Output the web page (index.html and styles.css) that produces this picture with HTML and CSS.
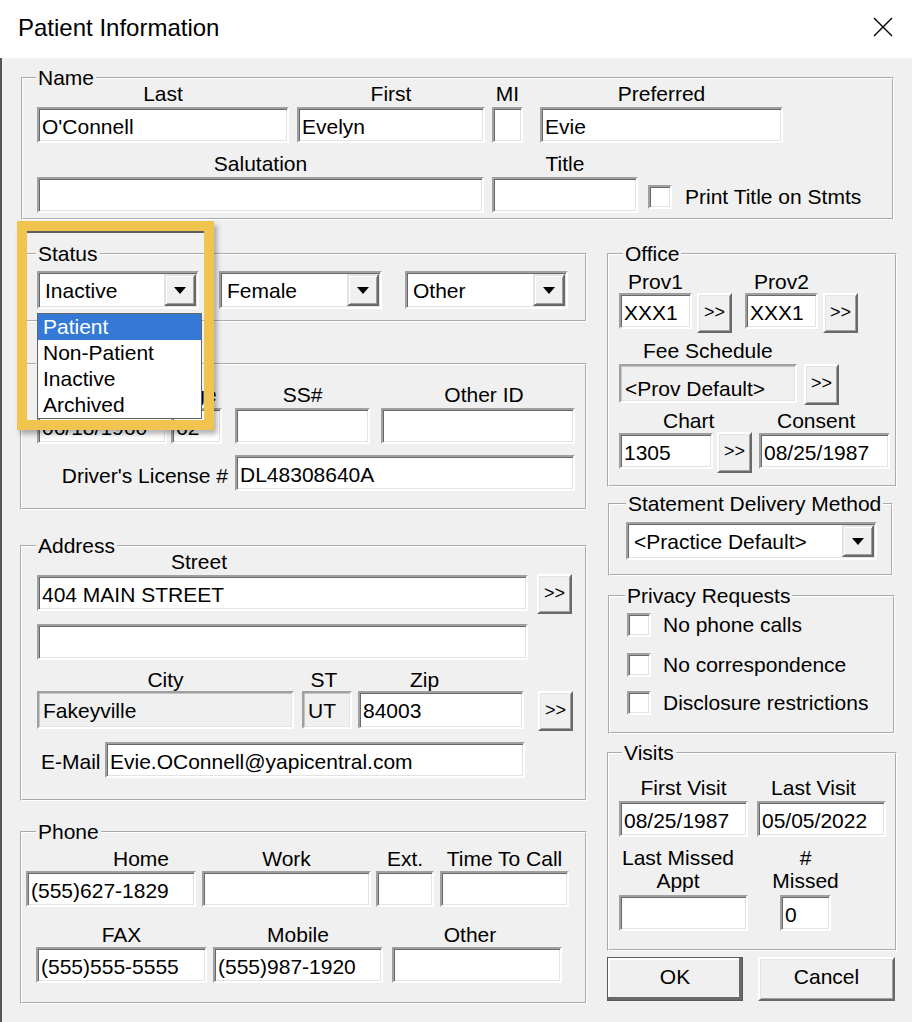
FILE: index.html
```html
<!DOCTYPE html>
<html lang="en">
<head>
    <meta charset="UTF-8">
    <meta name="viewport" content="width=device-width, initial-scale=1.0">
    <title>Patient Information</title>
    <link rel="stylesheet" href="styles.css">
</head>
<body>
    <div class="titlebar">
        <span class="title">Patient Information</span>
        <svg class="close" width="20" height="20" viewBox="0 0 20 20"><path d="M1 1L19 19M19 1L1 19" stroke="#000" stroke-width="1.4" fill="none"/></svg>
    </div>

    <fieldset class="grp g-name">
        <legend>Name</legend>
        <div class="row r-top">
            <div class="col c-last"><span class="lbl">Last</span><div class="fld">O'Connell</div></div>
            <div class="col c-first"><span class="lbl">First</span><div class="fld">Evelyn</div></div>
            <div class="col c-mi"><span class="lbl">MI</span><div class="fld"></div></div>
            <div class="col c-pref"><span class="lbl">Preferred</span><div class="fld">Evie</div></div>
        </div>
        <div class="row r-second">
            <div class="col c-sal"><span class="lbl">Salutation</span><div class="fld"></div></div>
            <div class="col c-title"><span class="lbl">Title</span><div class="fld"></div></div>
            <div class="chk chk-title"><span class="box"></span><span class="txt">Print Title on Stmts</span></div>
        </div>
    </fieldset>

    <div class="cols">
        <div class="left">
            <fieldset class="grp g-status">
                <legend>Status</legend>
                <div class="row">
                    <div class="combo cb-status"><span class="val">Inactive</span><span class="arr"></span></div>
                    <div class="combo cb-gender"><span class="val">Female</span><span class="arr"></span></div>
                    <div class="combo cb-other"><span class="val">Other</span><span class="arr"></span></div>
                </div>
            </fieldset>

            <!-- legend and birth date label sit under the open list -->
            <fieldset class="grp g-birth">
                <legend class="hidden-legend"></legend>
                <div class="row r-birth">
                    <div class="col c-bd"><span class="lbl"></span><div class="fld">06/18/1960</div></div>
                    <div class="col c-age"><span class="lbl">Age</span><div class="fld">62</div></div>
                    <div class="col c-ss"><span class="lbl">SS#</span><div class="fld"></div></div>
                    <div class="col c-oid"><span class="lbl">Other ID</span><div class="fld"></div></div>
                </div>
                <div class="row r-lic">
                    <span class="lic-lbl">Driver's License #</span>
                    <div class="fld f-lic">DL48308640A</div>
                </div>
            </fieldset>

            <fieldset class="grp g-addr">
                <legend>Address</legend>
                <span class="lbl street-lbl">Street</span>
                <div class="row r-street">
                    <div class="fld f-street">404 MAIN STREET</div>
                    <span class="more">&gt;&gt;</span>
                </div>
                <div class="fld f-street2"></div>
                <div class="row r-city">
                    <div class="col c-city"><span class="lbl">City</span><div class="fld off">Fakeyville</div></div>
                    <div class="col c-st"><span class="lbl">ST</span><div class="fld off">UT</div></div>
                    <div class="col c-zip"><span class="lbl">Zip</span><div class="fld">84003</div></div>
                    <span class="more">&gt;&gt;</span>
                </div>
                <div class="row r-mail">
                    <span class="lbl mail-lbl">E-Mail</span>
                    <div class="fld f-mail">Evie.OConnell@yapicentral.com</div>
                </div>
            </fieldset>

            <fieldset class="grp g-phone">
                <legend>Phone</legend>
                <div class="row r-ph1">
                    <div class="col c-home"><span class="lbl">Home</span><div class="fld">(555)627-1829</div></div>
                    <div class="col c-work"><span class="lbl">Work</span><div class="fld"></div></div>
                    <div class="col c-ext"><span class="lbl">Ext.</span><div class="fld"></div></div>
                    <div class="col c-ttc"><span class="lbl">Time To Call</span><div class="fld"></div></div>
                </div>
                <div class="row r-ph2">
                    <div class="col c-fax"><span class="lbl">FAX</span><div class="fld">(555)555-5555</div></div>
                    <div class="col c-mob"><span class="lbl">Mobile</span><div class="fld">(555)987-1920</div></div>
                    <div class="col c-oth"><span class="lbl">Other</span><div class="fld"></div></div>
                </div>
            </fieldset>
        </div>

        <div class="right">
            <fieldset class="grp g-office">
                <legend>Office</legend>
                <div class="row r-prov">
                    <div class="col c-prov"><span class="lbl">Prov1</span><div class="fld">XXX1</div></div>
                    <span class="more">&gt;&gt;</span>
                    <div class="col c-prov c-prov2"><span class="lbl">Prov2</span><div class="fld">XXX1</div></div>
                    <span class="more">&gt;&gt;</span>
                </div>
                <span class="lbl fee-lbl">Fee Schedule</span>
                <div class="row r-fee">
                    <div class="fld off f-fee">&lt;Prov Default&gt;</div>
                    <span class="more">&gt;&gt;</span>
                </div>
                <div class="row r-chart-lbl">
                    <span class="lbl lbl-chart">Chart</span>
                    <span class="lbl">Consent</span>
                </div>
                <div class="row r-chart">
                    <div class="fld f-chart">1305</div>
                    <span class="more">&gt;&gt;</span>
                    <div class="fld f-consent">08/25/1987</div>
                </div>
            </fieldset>

            <fieldset class="grp g-stmt">
                <legend>Statement Delivery Method</legend>
                <div class="combo cb-stmt"><span class="val">&lt;Practice Default&gt;</span><span class="arr"></span></div>
            </fieldset>

            <fieldset class="grp g-priv">
                <legend>Privacy Requests</legend>
                <div class="chk chk-1"><span class="box"></span><span class="txt">No phone calls</span></div>
                <div class="chk chk-2"><span class="box"></span><span class="txt">No correspondence</span></div>
                <div class="chk chk-3"><span class="box"></span><span class="txt">Disclosure restrictions</span></div>
            </fieldset>

            <fieldset class="grp g-visits">
                <legend>Visits</legend>
                <div class="row r-v1">
                    <div class="col c-fv"><span class="lbl">First Visit</span><div class="fld">08/25/1987</div></div>
                    <div class="col c-lv"><span class="lbl">Last Visit</span><div class="fld">05/05/2022</div></div>
                </div>
                <div class="row r-v2">
                    <div class="col c-lm"><span class="lbl2">Last Missed<br>Appt</span><div class="fld"></div></div>
                    <div class="col c-nm"><span class="lbl2">#<br>Missed</span><div class="fld">0</div></div>
                </div>
            </fieldset>

            <div class="buttons">
                <span class="btn btn-ok">OK</span>
                <span class="btn btn-cancel">Cancel</span>
            </div>
        </div>
    </div>

    <!-- open status list and the highlight frame around it -->
    <ul class="droplist">
        <li class="sel">Patient</li>
        <li>Non-Patient</li>
        <li>Inactive</li>
        <li>Archived</li>
    </ul>
    <div class="callout"></div>
</body>
</html>
```

FILE: styles.css
```css
* {
    box-sizing: border-box;
}
body {
    margin: 0;
    width: 912px;
    height: 1022px;
    position: relative;
    overflow: hidden;
    background-color: #f0f0f0;
    font-family: "Liberation Sans", Arial, sans-serif;
    font-size: 21px;
    color: #000;
    box-shadow: inset 2px 0 #555;
}
.titlebar {
    display: flex;
    height: 58px;
    padding-left: 18px;
    background-color: #fff;
}
.title {
    font-size: 24px;
    line-height: 55px;
}
.close {
    margin: 17px 19px 0 auto;
}

/* group boxes */
.grp {
    margin: 0;
    padding: 0 0 0 15px;
    border: 2px groove #fff;
    min-width: 0;
}
.grp legend {
    height: 14px;
    padding: 0 2px;
    margin-left: -1px;
    line-height: 14px;
    white-space: nowrap;
}
.grp .hidden-legend {
    width: 100px;
}
.row {
    display: flex;
    align-items: flex-start;
}
.col {
    display: flex;
    flex-direction: column;
    align-items: center;
}
.lbl {
    height: 22px;
    line-height: 22px;
    white-space: nowrap;
}
.lbl2 {
    height: 46px;
    line-height: 23px;
    text-align: center;
    white-space: nowrap;
}

/* controls */
.fld {
    height: 36px;
    padding: 5px 0 0 3px;
    border: 2px solid;
    border-color: #a0a0a0 #fff #fff #a0a0a0;
    box-shadow: inset 1px 1px #696969, inset -1px -1px #e3e3e3;
    background-color: #fff;
    line-height: 26px;
    white-space: nowrap;
    overflow: hidden;
}
.fld.off {
    background-color: #f0f0f0;
    border-color: #a0a0a0 #fff #fff #a0a0a0;
    box-shadow: inset 1px 1px #c4c4c4, inset -1px -1px #e3e3e3;
    padding-left: 4px;
}
.col .fld {
    width: 100%;
    margin-top: 2px;
}
.more {
    width: 35px;
    height: 40px;
    flex: none;
    border: 2px solid;
    border-color: #fff #696969 #696969 #fff;
    box-shadow: inset 1px 1px #e3e3e3, inset -1px -1px #a0a0a0;
    background-color: #f0f0f0;
    font-size: 18px;
    line-height: 35px;
    text-align: center;
}
.combo {
    display: flex;
    height: 38px;
    border: 2px solid;
    border-color: #a0a0a0 #fff #fff #a0a0a0;
    box-shadow: inset 1px 1px #696969, inset -1px -1px #e3e3e3;
    background-color: #fff;
}
.combo .val {
    flex: 1;
    padding: 5px 0 0 6px;
    line-height: 26px;
    white-space: nowrap;
    overflow: hidden;
}
.combo .arr {
    width: 32px;
    margin: 1px 1px 1px 0;
    display: flex;
    align-items: center;
    justify-content: center;
    border: 2px solid;
    border-color: #e3e3e3 #696969 #696969 #e3e3e3;
    box-shadow: inset 1px 1px #fff, inset -1px -1px #a0a0a0;
    background-color: #f0f0f0;
}
.combo .arr::after {
    content: "";
    border-left: 6px solid transparent;
    border-right: 6px solid transparent;
    border-top: 7px solid #000;
}
.chk {
    display: flex;
    align-items: center;
}
.box {
    width: 24px;
    height: 24px;
    border: 2px solid;
    border-color: #a0a0a0 #fff #fff #a0a0a0;
    box-shadow: inset 1px 1px #696969, inset -1px -1px #e3e3e3;
    background-color: #fff;
}
.chk .txt {
    margin-left: 12px;
    line-height: 22px;
    white-space: nowrap;
}
.btn {
    height: 44px;
    border: 2px solid;
    border-color: #fff #696969 #696969 #fff;
    box-shadow: inset 1px 1px #e3e3e3, inset -1px -1px #a0a0a0;
    background-color: #f0f0f0;
    line-height: 36px;
    text-align: center;
}
.btn-ok {
    width: 136px;
    border: 1px solid #5a5a5a;
    box-shadow: inset -3px -3px #696969, inset 2px 2px #fff;
    line-height: 38px;
}
.btn-cancel {
    width: 137px;
    margin-left: 15px;
}

/* Name */
.g-name {
    margin: 13px 0 0 21px;
    width: 873px;
    height: 149px;
    padding-left: 14px;
}
.r-top { margin-top: -2px; }
.r-second { margin-top: 10px; }
.c-last { width: 252px; }
.c-first { width: 188px; margin-left: 8px; }
.c-mi { width: 31px; margin-left: 7px; }
.c-pref { width: 243px; margin-left: 17px; }
.c-sal { width: 447px; }
.c-title { width: 146px; margin-left: 8px; }
.chk-title {
    align-self: flex-end;
    margin: 0 0 4px 10px;
}
.chk-title .txt { margin-left: 13px; }

.cols {
    display: flex;
    gap: 20px;
    padding-left: 20px;
}
.left { width: 567px; }
.right { width: 290px; }

/* Status */
.g-status { margin-top: 27px; height: 75px; }
.g-status .row { margin-top: 10px; }
.cb-status { width: 162px; }
.cb-gender { width: 163px; margin-left: 20px; }
.cb-other { width: 163px; margin-left: 23px; }

/* Birth / ids */
.g-birth { margin-top: 35px; height: 153px; }
.r-birth { margin-top: 13px; }
.c-bd { width: 130px; }
.c-age { width: 51px; margin-left: 4px; }
.c-age .lbl { padding-left: 3px; }
.c-ss { width: 135px; margin-left: 13px; }
.c-oid { width: 194px; margin-left: 11px; }
.c-oid .lbl { padding-left: 12px; }
.r-lic {
    margin-top: 11px;
    align-items: center;
}
.lic-lbl {
    width: 198px;
    padding: 5px 7px 0 0;
    line-height: 22px;
    text-align: right;
    white-space: nowrap;
}
.f-lic { width: 340px; }

/* Address */
.g-addr { margin-top: 29px; height: 262px; }
.street-lbl {
    display: block;
    margin-top: -2px;
    padding-left: 134px;
}
.r-street { margin-top: 2px; }
.f-street { width: 491px; }
.r-street .more { margin: -1px 0 0 9px; }
.f-street2 { width: 491px; margin-top: 10px; }
.r-city {
    margin-top: 9px;
    align-items: flex-end;
}
.r-city .col .fld { margin-top: 0; height: 38px; }
.c-city { width: 257px; }
.c-st { width: 50px; margin-left: 8px; }
.c-st .lbl { padding-right: 6px; }
.c-zip { width: 166px; margin-left: 6px; }
.c-zip .lbl { align-self: flex-start; padding-left: 52px; }
.r-city .more { margin: 0 0 -2px 14px; }
.r-mail {
    margin-top: 13px;
    align-items: flex-end;
}
.mail-lbl {
    width: 68px;
    padding-left: 4px;
    margin-bottom: 5px;
}
.f-mail { width: 420px; }

/* Phone */
.g-phone { margin-top: 24px; height: 179px; padding-left: 4px; }
.g-phone legend { margin-left: 10px; }
.r-ph1 { margin-top: 9px; }
.r-ph2 { margin-top: 17px; margin-left: 10px; }
.g-phone .col .fld { margin-top: 1px; }
.c-home { width: 170px; }
.c-home .lbl { align-self: flex-start; padding-left: 87px; }
.c-work { width: 169px; margin-left: 6px; }
.c-ext { width: 58px; margin-left: 5px; }
.c-ttc { width: 129px; margin-left: 6px; }
.c-fax { width: 171px; }
.c-mob { width: 170px; margin-left: 6px; }
.c-oth { width: 170px; margin-left: 9px; }
.c-oth .lbl { padding-right: 14px; }

/* Office */
.right .grp { padding-left: 10px; }
.g-office { margin-top: 27px; height: 240px; }
.g-office legend { margin-left: 4px; }
.r-prov { margin-top: 10px; }
.r-prov .col .fld { margin-top: 0; }
.c-prov { width: 73px; }
.c-prov2 { margin-left: 13px; }
.r-prov .more { margin: 22px 0 0 5px; }
.fee-lbl {
    display: block;
    margin-top: 7px;
    padding-left: 24px;
}
.r-fee { margin-top: 2px; }
.f-fee {
    width: 178px;
    height: 39px;
    padding-top: 10px;
    line-height: 25px;
}
.r-fee .more { height: 41px; margin-left: 7px; }
.r-chart-lbl { margin-top: 5px; }
.lbl-chart { width: 158px; padding-left: 44px; }
.f-chart { width: 94px; margin-top: 1px; }
.r-chart .more { height: 41px; margin-left: 4px; }
.f-consent { width: 131px; margin: 1px 0 0 7px; }

/* Statement */
.right .g-stmt {
    margin: 10px 0 0 1px;
    width: 285px;
    height: 79px;
    padding-left: 16px;
}
.g-stmt legend { margin-left: 0; }
.cb-stmt { width: 251px; margin-top: 11px; }

/* Privacy */
.right .g-priv {
    margin: 13px 0 0 1px;
    width: 287px;
    height: 145px;
    padding-left: 17px;
}
.g-priv legend { margin-left: -2px; }
.chk-1 { margin-top: 10px; }
.chk-2 { margin-top: 16px; }
.chk-3 { margin-top: 14px; }

/* Visits */
.g-visits { margin-top: 12px; height: 205px; }
.g-visits legend { margin-left: 3px; }
.r-v1 { margin-top: 17px; }
.c-fv { width: 129px; }
.c-lv { width: 129px; margin-left: 9px; }
.c-lv .lbl { padding-right: 16px; }
.r-v2 { margin-top: 9px; }
.r-v2 .col .fld { margin-top: 3px; }
.c-lm { width: 129px; }
.c-lm .lbl2 { padding-right: 11px; }
.c-nm { width: 65px; margin-left: 25px; }
.c-nm .fld { width: 51px; }

.buttons {
    display: flex;
    margin-top: 6px;
}

/* dropdown list and highlight frame */
.droplist {
    position: absolute;
    left: 37px;
    top: 313px;
    width: 165px;
    height: 106px;
    margin: 0;
    padding: 0;
    list-style: none;
    background-color: #fff;
    border: 1px solid #646464;
}
.droplist li {
    height: 26px;
    padding-left: 5px;
    line-height: 26px;
}
.droplist .sel {
    background-color: #3379d5;
    color: #fff;
}
.callout {
    position: absolute;
    left: 17px;
    top: 221px;
    width: 197px;
    height: 209px;
    border: 10px solid #f0c44e;
    box-shadow: 3px 4px 5px rgba(0, 0, 0, 0.3), inset 0 2px 0 #5c5c5c;
}
```
